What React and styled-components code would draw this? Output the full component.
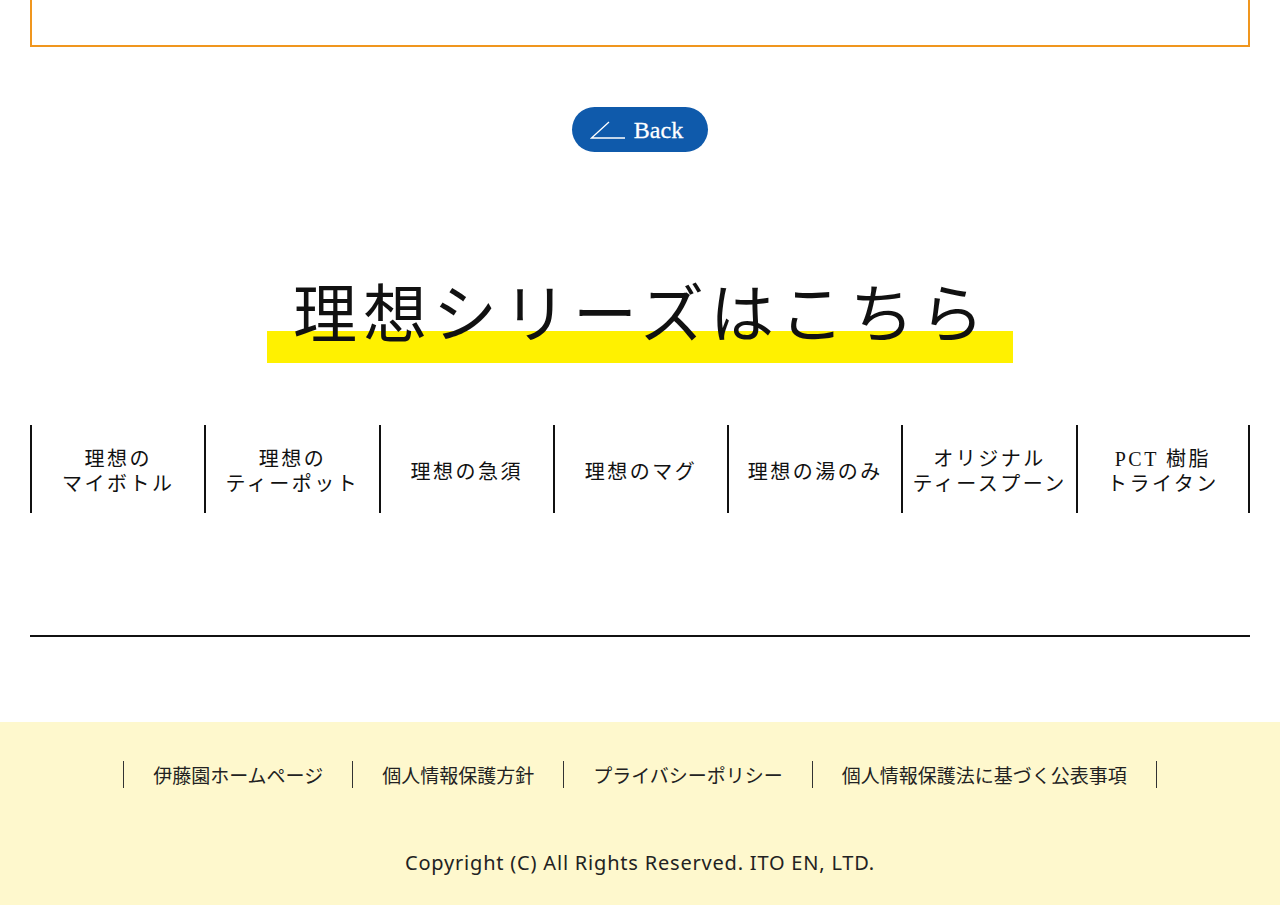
import React from "react";
import styled, { createGlobalStyle } from "styled-components";

const Global = createGlobalStyle`
  html, body { margin: 0; padding: 0; background: #fff; }
  body { font-family: "Noto Sans CJK JP", "Noto Sans", sans-serif; color: #111; }
  a { color: inherit; text-decoration: none; }
`;

const Page = styled.div`
  width: 1220px;
  margin: 0 auto;
`;

const TopBox = styled.div`
  height: 45px;
  border: 2px solid #f0961e;
  border-top: none;
`;

const BackRow = styled.div`
  display: flex;
  justify-content: center;
  margin-top: 60px;
`;

const BackButton = styled.a`
  display: inline-flex;
  align-items: center;
  gap: 8px;
  height: 45px;
  padding: 0 25px 0 18px;
  border-radius: 23px;
  background: #0f5aab;
  color: #fff;
  font-family: "Liberation Serif", "DejaVu Serif", serif;
  font-size: 24px;
  line-height: 1;
  -webkit-text-stroke: 0.3px #fff;
`;

const HeadingRow = styled.div`
  display: flex;
  justify-content: center;
  margin-top: 117px;
`;

const Heading = styled.h2`
  display: inline-block;
  margin: 0;
  padding: 0 23px 0 26px;
  font-family: "Liberation Serif", "Noto Sans CJK JP", serif;
  font-weight: 400;
  font-size: 64px;
  line-height: 94px;
  letter-spacing: 6px;
  background: linear-gradient(to bottom, transparent 62px, #fff100 62px);
`;

const Nav = styled.ul`
  list-style: none;
  margin: 62px 0 0;
  padding: 0;
  display: grid;
  grid-template-columns: repeat(7, 1fr);
`;

const NavItem = styled.li`
  height: 88px;
  box-sizing: border-box;
  padding-top: 6px;
  display: flex;
  align-items: center;
  justify-content: center;
  text-align: center;
  border-left: 2px solid #111;
  &:last-child { border-right: 2px solid #111; }
  font-family: "Liberation Serif", "Noto Sans CJK JP", serif;
  font-size: 20px;
  line-height: 25px;
  letter-spacing: 2.5px;
  color: #111;
`;

const Rule = styled.hr`
  margin: 122px 0 0;
  border: none;
  border-top: 2px solid #111;
`;

const Footer = styled.footer`
  margin-top: 85px;
  background: #fef8cd;
  height: 190px;
  display: flex;
  flex-direction: column;
  align-items: center;
  padding-top: 39px;
  box-sizing: border-box;
`;

const FooterLinks = styled.ul`
  list-style: none;
  margin: 0;
  padding: 0;
  display: flex;
`;

const FooterLink = styled.li`
  padding: 0 29px;
  border-left: 1.5px solid #333;
  &:last-child { border-right: 1.5px solid #333; }
  font-size: 19px;
  line-height: 27px;
  color: #222;
`;

const Copyright = styled.p`
  margin: 61px 0 0;
  font-size: 20px;
  letter-spacing: 0.8px;
  color: #222;
  font-family: "Noto Sans", "Noto Sans CJK JP", sans-serif;
`;

const items = [
  ["理想の", "マイボトル"],
  ["理想の", "ティーポット"],
  ["理想の急須"],
  ["理想のマグ"],
  ["理想の湯のみ"],
  ["オリジナル", "ティースプーン"],
  ["PCT 樹脂", "トライタン"],
];

const links = [
  "伊藤園ホームページ",
  "個人情報保護方針",
  "プライバシーポリシー",
  "個人情報保護法に基づく公表事項",
];

export default function App() {
  return (
    <>
      <Global />
      <Page>
        <TopBox />
        <BackRow>
          <BackButton href="#">
            <svg width="36" height="18" viewBox="0 0 36 18" fill="none">
              <path d="M19 1 L1.5 17 L35 17" stroke="#fff" strokeWidth="1.3" />
            </svg>
            Back
          </BackButton>
        </BackRow>
        <HeadingRow>
          <Heading>理想シリーズはこちら</Heading>
        </HeadingRow>
        <Nav>
          {items.map((lines, i) => (
            <NavItem key={i}>
              <a href="#">
                {lines.map((l, j) => (
                  <React.Fragment key={j}>
                    {j > 0 && <br />}
                    {l}
                  </React.Fragment>
                ))}
              </a>
            </NavItem>
          ))}
        </Nav>
        <Rule />
      </Page>
      <Footer>
        <FooterLinks>
          {links.map((l) => (
            <FooterLink key={l}>
              <a href="#">{l}</a>
            </FooterLink>
          ))}
        </FooterLinks>
        <Copyright>Copyright (C) All Rights Reserved. ITO EN, LTD.</Copyright>
      </Footer>
    </>
  );
}
